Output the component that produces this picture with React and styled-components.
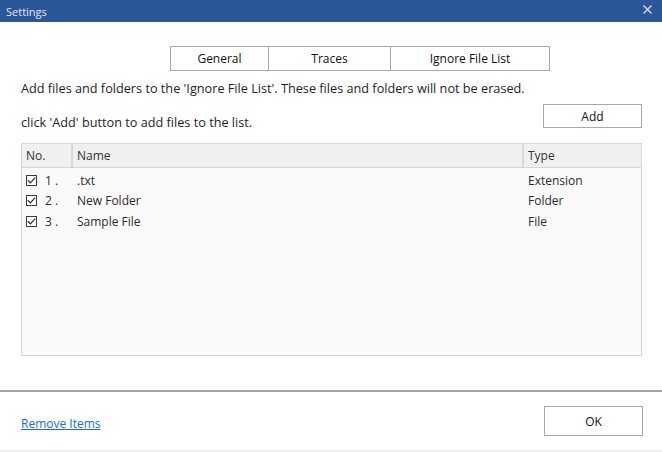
import React from "react"
import styled, { createGlobalStyle } from "styled-components"

const GlobalStyle = createGlobalStyle`
  html, body {
    margin: 0;
    padding: 0;
    background: #ffffff;
  }
  body {
    font-family: "Open Sans", "Noto Sans", sans-serif;
    font-size: 12px;
    color: #1e1e1e;
  }
`

const Window = styled.div`
  width: 662px;
  height: 452px;
  display: flex;
  flex-direction: column;
  background: #fff;
  box-sizing: border-box;
`

const TitleBar = styled.div`
  height: 22px;
  background: #2b579a;
  display: flex;
  align-items: center;
  justify-content: space-between;
  padding: 0 10px 0 6px;
  color: #e4e9f2;
  font-size: 11px;
`

const CloseIcon = styled.svg`
  display: block;
  margin-top: -4px;
`

const Content = styled.div`
  flex: 1;
  padding: 0 20px 0 21px;
  display: flex;
  flex-direction: column;
`

const Tabs = styled.div`
  display: flex;
  margin: 24px 0 0 149px;
  height: 25px;
`

const Tab = styled.div`
  width: ${p => p.w}px;
  box-sizing: border-box;
  border: 1px solid #a9a9a9;
  border-left: ${p => (p.first ? "1px solid #a9a9a9" : "none")};
  display: flex;
  align-items: center;
  justify-content: center;
  font-size: 12px;
  color: #111;
`

const Description = styled.div`
  margin-top: 9px;
  line-height: 16px;
  font-size: 12.7px;
  white-space: nowrap;
`

const AddRow = styled.div`
  display: flex;
  justify-content: space-between;
  align-items: flex-start;
  margin-top: 8px;
  height: 24px;
`

const Hint = styled.div`
  line-height: 16px;
  font-size: 12.7px;
  padding-top: 10px;
`

const Button = styled.button`
  width: ${p => p.w}px;
  height: ${p => p.h}px;
  box-sizing: border-box;
  background: #fff;
  border: 1px solid #a9a9a9;
  font-family: inherit;
  font-size: 12px;
  color: #111;
  padding: 0;
  cursor: pointer;
`

const Table = styled.div`
  margin-top: 15px;
  width: 621px;
  height: 213px;
  box-sizing: border-box;
  border: 1px solid #d6d6d6;
  background: #fafafa;
  display: flex;
  flex-direction: column;
`

const HeaderRow = styled.div`
  display: grid;
  grid-template-columns: 49px 451px 1fr;
  height: 23px;
  background: #f0f0f0;
  border-bottom: 1px solid #d6d6d6;
  color: #333;
`

const HeaderCell = styled.div`
  display: flex;
  align-items: center;
  padding-left: ${p => p.pl || 4}px;
  border-left: ${p => (p.divider ? "2px solid #d9d9d9" : "none")};
`

const Body = styled.div`
  padding-top: 2px;
`

const Row = styled.div`
  display: grid;
  grid-template-columns: 49px 451px 1fr;
  height: 20.5px;
  align-items: center;
  color: #2a2a2a;
`

const Cell = styled.div`
  display: flex;
  align-items: center;
  padding-left: ${p => p.pl || 0}px;
  white-space: nowrap;
`

const Check = styled.span`
  width: 11px;
  height: 11px;
  box-sizing: border-box;
  border: 1px solid #3c3c3c;
  display: inline-flex;
  align-items: center;
  justify-content: center;
  margin: 0 8px 0 4px;
  background: #fff;
`

const Footer = styled.div`
  border-top: 2px solid #a5a5a5;
  height: 58px;
  display: flex;
  align-items: center;
  justify-content: space-between;
  padding: 0 19px 0 21px;
  margin-top: 33px;
`

const LinkText = styled.a`
  color: #1a6dd6;
  text-decoration: underline;
  font-size: 12px;
  margin-top: 4px;
`

const BottomStrip = styled.div`
  height: 2px;
  background: #eeeeee;
`

const items = [
  { no: 1, name: ".txt", type: "Extension" },
  { no: 2, name: "New Folder", type: "Folder" },
  { no: 3, name: "Sample File", type: "File" },
]

function CheckMark() {
  return (
    <svg width="9" height="9" viewBox="0 0 9 9">
      <path d="M0.8 4.3 L3.4 6.9 L8.2 1.6" fill="none" stroke="#333" strokeWidth="1.3" />
    </svg>
  )
}

export default function App() {
  return (
    <Window>
      <GlobalStyle />
      <TitleBar>
        <span>Settings</span>
        <CloseIcon width="9" height="9" viewBox="0 0 9 9">
          <path d="M0.5 0.5 L8.5 8.5 M8.5 0.5 L0.5 8.5" stroke="#d5dcea" strokeWidth="1.4" />
        </CloseIcon>
      </TitleBar>
      <Content>
        <Tabs>
          <Tab w={99} first>General</Tab>
          <Tab w={122}>Traces</Tab>
          <Tab w={159}>Ignore File List</Tab>
        </Tabs>
        <Description>
          Add files and folders to the 'Ignore File List'. These files and folders will not be erased.
        </Description>
        <AddRow>
          <Hint>click 'Add' button to add files to the list.</Hint>
          <Button w={99} h={24}>Add</Button>
        </AddRow>
        <Table>
          <HeaderRow>
            <HeaderCell>No.</HeaderCell>
            <HeaderCell divider pl={4}>Name</HeaderCell>
            <HeaderCell divider pl={4}>Type</HeaderCell>
          </HeaderRow>
          <Body>
            {items.map(it => (
              <Row key={it.no}>
                <Cell>
                  <Check><CheckMark /></Check>
                  {it.no} .
                </Cell>
                <Cell pl={6}>{it.name}</Cell>
                <Cell pl={6}>{it.type}</Cell>
              </Row>
            ))}
          </Body>
        </Table>
      </Content>
      <Footer>
        <LinkText href="#">Remove Items</LinkText>
        <Button w={99} h={30}>OK</Button>
      </Footer>
      <BottomStrip />
    </Window>
  )
}
